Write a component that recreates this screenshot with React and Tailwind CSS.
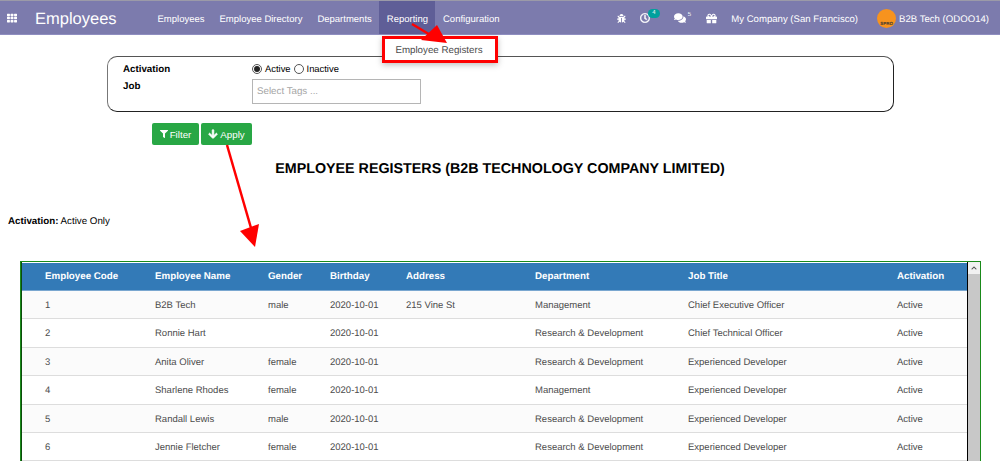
import React from "react";
import { FaTh, FaBug, FaComments, FaGift, FaFilter, FaArrowDown, FaRegClock, FaChevronUp } from "react-icons/fa";

const nav = ["Employees", "Employee Directory", "Departments", "Reporting", "Configuration"];
const cols = ["Employee Code", "Employee Name", "Gender", "Birthday", "Address", "Department", "Job Title", "Activation"];
const RD = "Research & Development";
const ED = "Experienced Developer";
const rows = [
  ["1", "B2B Tech", "male", "2020-10-01", "215 Vine St", "Management", "Chief Executive Officer", "Active"],
  ["2", "Ronnie Hart", "", "2020-10-01", "", RD, "Chief Technical Officer", "Active"],
  ["3", "Anita Oliver", "female", "2020-10-01", "", RD, ED, "Active"],
  ["4", "Sharlene Rhodes", "female", "2020-10-01", "", "Management", ED, "Active"],
  ["5", "Randall Lewis", "male", "2020-10-01", "", RD, ED, "Active"],
  ["6", "Jennie Fletcher", "female", "2020-10-01", "", RD, ED, "Active"],
  ["7", "", "", "", "", "", "", ""],
];
const grid = "grid grid-cols-[133px_113px_62px_76px_129px_153px_209px_70px]";

function Radio({ on }) {
  return (
    <span className="inline-flex w-[10px] h-[10px] rounded-full border border-[#555] bg-white items-center justify-center">
      {on && <span className="w-[6px] h-[6px] rounded-full bg-[#222]" />}
    </span>
  );
}

export default function App() {
  return (
    <div className="relative w-[1000px] h-[461px] overflow-hidden bg-white text-[#4c4c4c] [text-rendering:geometricPrecision] font-['Liberation_Sans',sans-serif]">
      {/* navbar */}
      <div className="h-[35px] bg-[#7c7bad] border-t border-t-[#9b9aa8] border-b border-b-[#8f8ec0] flex items-stretch text-white">
        <div className="w-[35px] flex items-center pl-[7px] pt-px"><FaTh className="text-[10px]" /></div>
        <div className="w-[115px] flex items-center text-[16.5px] leading-none pt-[3px]">Employees</div>
        <div className="flex">
          {nav.map((n) => (
            <div key={n} className={`flex items-center px-[7.5px] pt-[5px] text-[9.5px] ${n === "Reporting" ? "bg-[#5f5e97]" : ""}`}>{n}</div>
          ))}
        </div>
        <div className="ml-auto flex items-center text-[9.6px] pr-[11px] pt-px">
          <FaBug className="text-[9px] mr-[14px]" />
          <div className="relative mr-[24px]">
            <FaRegClock className="text-[10px]" strokeWidth={20} />
            <span className="absolute left-[8px] -top-[4px] w-[12px] h-[9px] rounded-full bg-[#00a09d] text-[6px] leading-[9px] text-center">4</span>
          </div>
          <FaComments className="text-[12px]" />
          <span className="text-[6px] ml-[2px] mr-[15px] -mt-[5px]">5</span>
          <FaGift className="text-[11px] mr-[14px]" />
          <span className="mr-[19px] pt-[4px]">My Company (San Francisco)</span>
          <span className="w-[19px] h-[19px] rounded-full bg-[#f7931e] mr-[3px] flex items-end justify-center overflow-hidden text-[4.5px] leading-[8px] font-bold text-[#333]">SPRO</span>
          <span className="pt-[4px]">B2B Tech (ODOO14)</span>
        </div>
      </div>

      {/* filter panel */}
      <div className="ml-[107px] mt-[21px] w-[787px] h-[56px] rounded-[10px] border border-[#222] border-l-[#777] border-t-[#555] pl-[15px] pt-[5px] text-[9.75px] text-black">
        <div className="flex h-[13px] items-center">
          <span className="w-[129px] font-bold pt-[3px]">Activation</span>
          <span className="flex items-center gap-[3px] text-[9.4px]"><Radio on /><span className="pt-[2px]">Active</span> <Radio /><span className="pt-[2px]">Inactive</span></span>
        </div>
        <div className="flex mt-[2px]">
          <span className="w-[129px] font-bold mt-[3px]">Job</span>
          <div className="w-[169px] h-[25px] mt-[2px] border border-[#b5b5b5] flex items-center pl-[4px] pt-[2px] text-[#a5a5a5]">Select Tags ...</div>
        </div>
      </div>

      {/* buttons */}
      <div className="flex gap-[2px] ml-[152px] mt-[11px] text-white text-[9.75px]">
        <button className="h-[22px] w-[47px] rounded-[2px] bg-[#28a745] flex items-center justify-center gap-[2px]"><FaFilter className="text-[8px]" /><span className="pt-[2px]">Filter</span></button>
        <button className="h-[22px] w-[51px] rounded-[2px] bg-[#28a745] flex items-center justify-center gap-[2px]"><FaArrowDown className="text-[10px]" strokeWidth={40} /><span className="pt-[2px]">Apply</span></button>
      </div>

      <h1 className="mt-[14px] text-center text-[14.3px] leading-[20px] font-bold text-black">EMPLOYEE REGISTERS (B2B TECHNOLOGY COMPANY LIMITED)</h1>

      <div className="ml-[8px] mt-[36px] text-[9.75px] leading-[14px] text-black"><b>Activation:</b> Active Only</div>

      {/* table */}
      <div className="ml-[20px] mt-[32px] w-[961px] border border-[#1a8a1a] flex">
        <div className="w-[947px] border-r border-r-black border-l border-l-[#0b4d0b]">
          <div className={`${grid} h-[28px] mt-px pt-[2px] bg-[#337ab7] text-white font-bold text-[9.75px] items-center border-b border-b-[#7aa7d0]`}>
            {cols.map((c, i) => <div key={c} className={i === 0 ? "pl-[23px]" : ""}>{c}</div>)}
          </div>
          {rows.map((r, ri) => (
            <div key={r[0]} className={`${grid} h-[28.4px] pt-[3px] items-center text-[9.5px] border-b border-b-[#ddd] ${ri % 2 === 0 ? "bg-[#fbfbfb]" : "bg-white"}`}>
              {r.map((v, i) => <div key={i} className={i === 0 ? "pl-[23px]" : ""}>{ri === 6 ? "" : v}</div>)}
            </div>
          ))}
        </div>
        <div className="w-[12px] bg-[#c8c8c8] relative">
          <div className="h-[12px] bg-[#f1f1f1] flex items-center justify-center"><FaChevronUp className="text-[6px] text-[#505050]" /></div>
        </div>
      </div>

      {/* annotations */}
      <div className="absolute left-[382px] top-[36px] w-[116px] h-[27px] pt-[3px] pr-[2px] bg-white border-[3px] border-[#f00] shadow-[0_2px_6px_rgba(0,0,0,0.25)] flex items-center justify-center text-[9.75px] text-[#4c4c4c]">Employee Registers</div>
      <svg className="absolute left-0 top-0 pointer-events-none" width="1000" height="461">
        <line x1="412" y1="24" x2="432" y2="36" stroke="#f00" strokeWidth="2.5" />
        <polygon points="447,43 421,40 437,25" fill="#f00" />
        <line x1="227" y1="145" x2="251" y2="228" stroke="#f00" strokeWidth="2.5" />
        <polygon points="255,247 240,231 259,224" fill="#f00" />
      </svg>
    </div>
  );
}
